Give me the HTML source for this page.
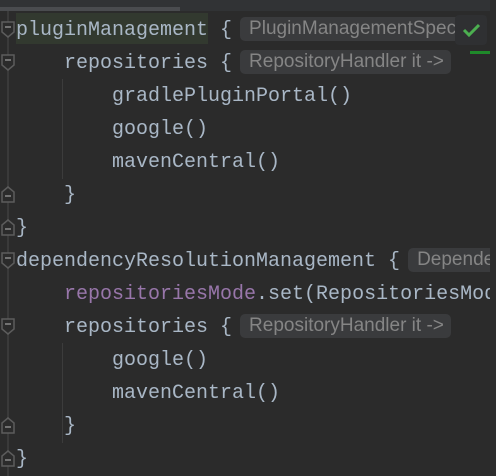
<!DOCTYPE html>
<html><head><meta charset="utf-8"><style>
html,body{margin:0;padding:0;}
body{width:496px;height:476px;background:#2b2b2b;position:relative;overflow:hidden;font-family:"Liberation Mono",monospace;}
.l{position:absolute;left:16px;width:474px;overflow:hidden;font-size:20px;color:#a9b7c6;white-space:pre;line-height:33px;height:33px;}
.h{display:inline-block;background:#3a3b3d;color:#858585;font-family:"Liberation Sans",sans-serif;font-size:19px;line-height:24px;padding:0 7px 0 9px;border-radius:5px;vertical-align:1px;margin-left:-4px;}
.p{color:#9876aa;}
.g{position:absolute;width:1px;background:#3c3c3c;}
</style></head><body>
<div style="position:absolute;left:0;top:0;width:496px;height:11px;background:#313335"></div>
<div style="position:absolute;left:0;top:7px;width:180px;height:4px;background:#4a4c4f"></div>
<div style="position:absolute;left:7px;top:11px;width:2px;height:465px;background:#3a3a3a"></div>
<div style="position:absolute;left:16px;top:13px;width:192px;height:31px;background:#32392f"></div>
<div class="g" style="left:62px;top:79px;height:100px"></div>
<div class="g" style="left:62px;top:343px;height:100px"></div>

<div class="l" style="top:14px">pluginManagement { <span class="h">PluginManagementSpec</span></div>
<div class="l" style="top:47px">    repositories { <span class="h">RepositoryHandler it -&gt;</span></div>
<div class="l" style="top:80px">        gradlePluginPortal()</div>
<div class="l" style="top:113px">        google()</div>
<div class="l" style="top:146px">        mavenCentral()</div>
<div class="l" style="top:179px">    }</div>
<div class="l" style="top:212px">}</div>
<div class="l" style="top:245px">dependencyResolutionManagement { <span class="h">Dependencies</span></div>
<div class="l" style="top:278px">    <span class="p">repositoriesMode</span>.set(RepositoriesMode</div>
<div class="l" style="top:311px">    repositories { <span class="h">RepositoryHandler it -&gt;</span></div>
<div class="l" style="top:344px">        google()</div>
<div class="l" style="top:377px">        mavenCentral()</div>
<div class="l" style="top:410px">    }</div>
<div class="l" style="top:443px">}</div>

<svg style="position:absolute;left:0;top:0" width="20" height="476">
<g fill="#2b2b2b" stroke="#5c5c5c" stroke-width="1.5">
<path d="M2 22h12v10l-6 5l-6-5z"/><path d="M2 55h12v10l-6 5l-6-5z"/><path d="M2 253h12v10l-6 5l-6-5z"/><path d="M2 319h12v10l-6 5l-6-5z"/>
<path d="M2 202h12v-10l-6-5l-6 5z"/><path d="M2 235h12v-10l-6-5l-6 5z"/><path d="M2 433h12v-10l-6-5l-6 5z"/><path d="M2 466h12v-10l-6-5l-6 5z"/>
</g>
<g stroke="#8a8a8a" stroke-width="1.5">
<path d="M5 27h6M5 60h6M5 258h6M5 324h6M5 196h6M5 229h6M5 427h6M5 460h6"/>
</g>
</svg>

<div style="position:absolute;left:455px;top:15px;width:32px;height:30px;background:#2f3032;border-radius:4px"></div>
<svg style="position:absolute;left:462px;top:22px" width="20" height="16"><path d="M2 8l5 5l10-10" fill="none" stroke="#4caf50" stroke-width="3"/></svg>
<div style="position:absolute;left:470px;top:51px;width:20px;height:3px;background:#1f8a2a"></div>
<div style="position:absolute;left:490px;top:0;width:6px;height:476px;background:#2e2e2e"></div>
</body></html>
